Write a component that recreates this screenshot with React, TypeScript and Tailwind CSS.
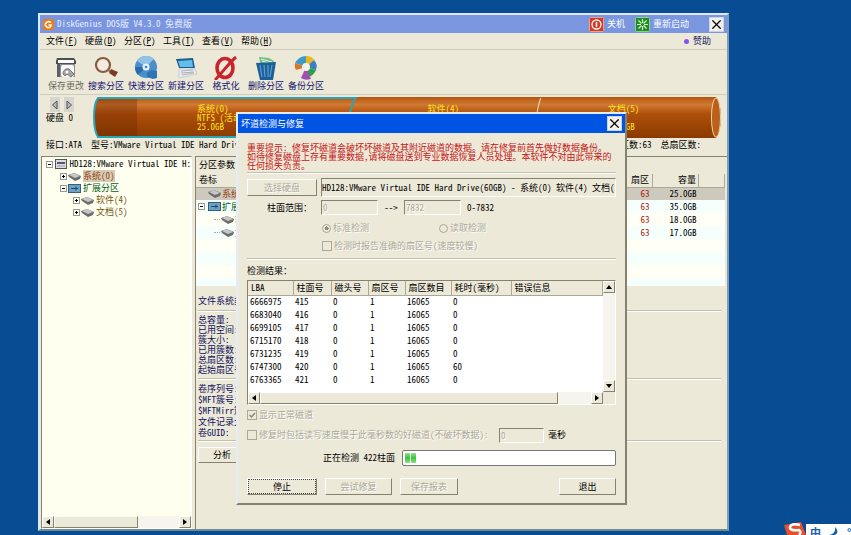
import React from 'react';
import { X } from 'lucide-react';

const raised = 'border border-t-white border-l-white border-r-[#85826f] border-b-[#85826f] bg-[#ece9d8]';
const sunken = 'border border-t-[#85826f] border-l-[#85826f] border-r-white border-b-white';
const disabledText = 'text-[#aca899] [text-shadow:1px_1px_0_#fff]';

const menus = [
  ['文件', 'F'],
  ['硬盘', 'D'],
  ['分区', 'P'],
  ['工具', 'T'],
  ['查看', 'V'],
  ['帮助', 'H'],
];

const SaveIcon = () => (
  <svg viewBox="0 0 24 24" className="w-6 h-6">
    <path d="M3 2h17l2 3v3H2V5z" fill="#4c4f52" />
    <path d="M4 4h16v3H4z" fill="#fafafa" />
    <path d="M3 8h18v13H3z" fill="#8b8f93" />
    <path d="M3 8h3v13H3z" fill="#5c6064" />
    <rect x="7" y="9" width="13" height="12" rx="2" fill="#f7f7f7" />
    <path d="M9 18c0-4 3-6 6-5l5 5-3 3-4-3-2 2z" fill="#a4a4a4" stroke="#555" strokeWidth=".7" />
    <circle cx="13" cy="16" r="1.500" fill="#fff" />
  </svg>
);

const SearchIcon = () => (
  <svg viewBox="0 0 24 24" className="w-6 h-6">
    <circle cx="9" cy="9" r="7" fill="#f3ece2" stroke="#8a5a3c" strokeWidth="2.200" />
    <path d="M14 14l3 2" stroke="#777" strokeWidth="2" />
    <path d="M17 13l7 3-3 5-6-4z" fill="#7b3a26" />
  </svg>
);

const QuickIcon = () => (
  <svg viewBox="0 0 24 24" className="w-6 h-6">
    <circle cx="12" cy="11" r="11" fill="#4a8fc9" />
    <path d="M12 11L3 5A11 11 0 0 1 20 3z" fill="#8fc3e8" />
    <path d="M12 11l-8 8a11 11 0 0 1-3-8z" fill="#2a6aa8" />
    <circle cx="12" cy="11" r="3.500" fill="#e8f2fa" />
    <circle cx="12" cy="11" r="1.300" fill="#3d86c4" />
    <path d="M13 17l4-3 6 1v7l-4 1-6-2z" fill="#2f74b5" />
  </svg>
);

const LaptopIcon = () => (
  <svg viewBox="0 0 24 24" className="w-6 h-6">
    <path d="M2 3l17-1 2 10H5z" fill="#1d5f92" />
    <path d="M4 5l14-1 1 7H6z" fill="#62bdec" />
    <path d="M5 13h16l2 5-18 4z" fill="#e9edf0" stroke="#b9c0c6" strokeWidth=".7" />
    <path d="M7 15l12-1M7 17l13-1M8 19l12-2" stroke="#9aa3aa" strokeWidth=".8" />
  </svg>
);

const FormatIcon = () => (
  <svg viewBox="0 0 24 24" className="w-6 h-6">
    <ellipse cx="11" cy="12" rx="8" ry="9.500" fill="none" stroke="#c9232d" strokeWidth="3.600" />
    <path d="M1 24C8 17 14 8 22 1" fill="none" stroke="#c9232d" strokeWidth="3" />
  </svg>
);

const TrashIcon = () => (
  <svg viewBox="0 0 24 24" className="w-6 h-6">
    <path d="M5 1l10 1 5 3-2 5H7z" fill="#6fbf8a" />
    <path d="M7 3l11 3M8 5l9 3" stroke="#e3f5e6" strokeWidth="1" />
    <path d="M2 7l20-1-3 18H6z" fill="#1d5f96" />
    <path d="M6 9l2 12M10 9l1 12M14 9v12M18 9l-2 12" stroke="#5ba0d0" strokeWidth="1.200" />
  </svg>
);

const BackupIcon = () => (
  <svg viewBox="0 0 24 24" className="w-6 h-6">
    <path d="M12 11L1 7Q5 0 12 0z" fill="#3d9bc9" />
    <path d="M12 11V0q6 0 8 4z" fill="#e9b91d" />
    <path d="M12 11l8-7q4 4 2 10z" fill="#3b7fc0" />
    <path d="M12 11l10 3q-2 5-7 7z" fill="#2f9e48" />
    <path d="M12 11l5 12q-6 2-10-1z" fill="#a14fb0" />
    <path d="M12 11L1 7q-1 4 1 7z" fill="#d8762b" />
    <circle cx="12" cy="11" r="4" fill="#f4f1e6" />
  </svg>
);

const tools = [
  { label: '保存更改', icon: <SaveIcon />, off: true },
  { label: '搜索分区', icon: <SearchIcon /> },
  { label: '快速分区', icon: <QuickIcon /> },
  { label: '新建分区', icon: <LaptopIcon /> },
  { label: '格式化', icon: <FormatIcon /> },
  { label: '删除分区', icon: <TrashIcon /> },
  { label: '备份分区', icon: <BackupIcon /> },
];

const DriveIcon = () => (
  <svg viewBox="0 0 13 9" className="w-[13px] h-[9px] shrink-0">
    <path d="M0 3l6-2 7 3-1 3-5 2-6-4z" fill="#6d6d6d" />
    <path d="M1 3l5-2 6 3-5 2z" fill="#c6c6c6" />
  </svg>
);

const ExtIcon = () => (
  <svg viewBox="0 0 13 9" className="w-[13px] h-[9px] shrink-0">
    <rect x=".5" y=".5" width="12" height="8" fill="#6ba3c4" stroke="#35607a" />
    <path d="M3 4.500h7M8 2.500v4" stroke="#24465a" />
  </svg>
);

const DiskIcon = () => (
  <svg viewBox="0 0 12 10" className="w-3 h-[10px] shrink-0">
    <rect x=".5" y=".5" width="11" height="9" fill="#dcdce4" stroke="#555" />
    <path d="M2 3h8v2H2z" fill="#555570" />
    <path d="M2 7h8" stroke="#99a" />
  </svg>
);

const Expander = ({ open }: { open?: boolean }) => (
  <svg viewBox="0 0 7 7" className="w-[7px] h-[7px] shrink-0">
    <rect x=".5" y=".5" width="6" height="6" fill="#fff" stroke="#9a9a8c" />
    <path d={open ? 'M2 3.500h3' : 'M2 3.500h3M3.500 2v3'} stroke="#000" />
  </svg>
);

const Arrow = ({ d }: { d: string }) => (
  <svg viewBox="0 0 8 8" className="w-2 h-2">
    <path d={d} />
  </svg>
);
const LEFT = 'M6 1v6L2 4z';
const RIGHT = 'M2 1v6l4-3z';
const UP = 'M1 6h6L4 2z';
const DOWN = 'M1 2h6L4 6z';

const DiskArrow = ({ label, d }: { label: string; d: string }) => (
  <button aria-label={label} className="w-[10px] h-[15px] flex items-center justify-center bg-[#d8d6cc]">
    <svg viewBox="0 0 8 12" className="w-2 h-3">
      <path d={d} fill="#b8b8b8" stroke="#555" />
    </svg>
  </button>
);

const ScrollButton = ({ label, d }: { label: string; d: string }) => (
  <button aria-label={label} className={`w-3 h-3 shrink-0 flex items-center justify-center ${raised}`}>
    <Arrow d={d} />
  </button>
);

const CloseButton = () => (
  <button aria-label="关闭" className="w-[15px] h-[15px] flex items-center justify-center bg-[#f4f2e8] border border-[#c9d3ee]">
    <X className="w-[15px] h-[15px] text-black shrink-0" strokeWidth={2} />
  </button>
);

const Rule = ({ className = '' }: { className?: string }) => (
  <div className={`h-[2px] shrink-0 border-t border-[#c2bfae] border-b border-b-white ${className}`} />
);

const Cylinder = () => (
  <div className="relative flex-1 h-[41px] mr-[5px] text-[#ffe21a]">
    <svg viewBox="0 0 628 41" preserveAspectRatio="none" className="absolute inset-0 w-full h-full">
      <defs>
        <linearGradient id="wood" x1="0" y1="0" x2="0" y2="1">
          <stop offset="0" stopColor="#b4560f" />
          <stop offset=".18" stopColor="#d07a34" />
          <stop offset=".4" stopColor="#b0500c" />
          <stop offset="1" stopColor="#8a3a00" />
        </linearGradient>
      </defs>
      <path d="M5 0H622Q627 6 627 20T622 41H5Q1 34 1 20T5 0z" fill="url(#wood)" />
      <path d="M5 0H44V41H5Q1 34 1 20T5 0z" fill="#6a2600" opacity=".35" />
      <path d="M262 1Q254 14 256 40H5Q1 34 1 20T5 1z" fill="none" stroke="#2aa5b8" strokeWidth="2" />
      <path d="M447 1q-6 16-4 40" fill="none" stroke="#f3d9b4" />
      <ellipse cx="622" cy="20.500" rx="4.500" ry="19.500" fill="#b8601c" stroke="#f0cfa0" />
    </svg>
    <div className="relative h-full grid grid-cols-[262fr_184fr_182fr] pt-[7px] leading-[9px] whitespace-nowrap">
      <div className="pl-[104px]">
        系统(0)
        <br />
        NTFS (活动)
        <br />
        25.0GB
      </div>
      <div className="pl-[72px]">
        软件(4)
        <br />
        NTFS
        <br />
        18.0GB
      </div>
      <div className="pl-[68px]">
        文档(5)
        <br />
        NTFS
        <br />
        17.0GB
      </div>
    </div>
  </div>
);

const PartitionTable = () => (
  <div className="h-[112px] shrink-0 bg-[repeating-linear-gradient(#f5fffb_0_13px,#fffff5_13px_26px)]">
    <table className="w-full table-fixed border-collapse">
      <colgroup>
        <col />
        <col className="w-[46px]" />
        <col className="w-[26px]" />
      </colgroup>
      <thead>
        <tr className="h-[13px] bg-[#ece9d8]">
          <th className="p-0 pl-[3px] font-normal border-b border-r border-[#aca899]">
            <div className="flex justify-between">
              <span>卷标</span>
              <span className="pr-[3px]">扇区</span>
            </div>
          </th>
          <th className="p-0 pr-[2px] font-normal text-right border-b border-r border-[#aca899]">容量</th>
          <th className="p-0 border-b border-r border-[#aca899]" />
        </tr>
      </thead>
      <tbody>
        <tr className="h-[13px] bg-[#cdc9bd]">
          <td className="p-0">
            <div className="flex items-center justify-between pr-[3px] text-[#b01818]">
              <span className="flex items-center gap-px pl-3 text-[#99460f]"><DriveIcon />系统(0)</span>
              63
            </div>
          </td>
          <td className="p-0 pr-[2px] text-right">25.0GB</td>
          <td />
        </tr>
        <tr className="h-[13px]">
          <td className="p-0">
            <div className="flex items-center justify-between pr-[3px] text-[#b01818]">
              <span className="flex items-center gap-px pl-[2px] text-[#006018]">
                <Expander open />
                <span className="w-px" />
                <ExtIcon />
                扩展分区
              </span>
              63
            </div>
          </td>
          <td className="p-0 pr-[2px] text-right">35.0GB</td>
          <td />
        </tr>
        {[['软件(4)', '18.0GB'], ['文档(5)', '17.0GB']].map(([name, size]) => (
          <tr key={name} className="h-[13px]">
            <td className="p-0">
              <div className="flex items-center justify-between pr-[3px] text-[#b01818]">
                <span className="flex items-center gap-px pl-[18px] text-[#99460f]">
                  <span className="w-[6px] border-t border-dotted border-[#aaa]" />
                  <DriveIcon />
                  {name}
                </span>
                63
              </div>
            </td>
            <td className="p-0 pr-[2px] text-right">{size}</td>
            <td />
          </tr>
        ))}
      </tbody>
    </table>
  </div>
);

const results = [
  ['6666975', '415', '0', '1', '16065', '0'],
  ['6683040', '416', '0', '1', '16065', '0'],
  ['6699105', '417', '0', '1', '16065', '0'],
  ['6715170', '418', '0', '1', '16065', '0'],
  ['6731235', '419', '0', '1', '16065', '0'],
  ['6747300', '420', '0', '1', '16065', '60'],
  ['6763365', '421', '0', '1', '16065', '0'],
];

const Results = () => (
  <div className={`bg-white ${sunken}`}>
    <div className="flex h-[111px]">
      <div className="flex-1">
        <table className="w-full table-fixed border-collapse">
          <colgroup>
            <col className="w-[45px]" />
            <col className="w-[38px]" />
            <col className="w-[37px]" />
            <col className="w-[37px]" />
            <col className="w-[46px]" />
            <col className="w-[60px]" />
            <col />
          </colgroup>
          <thead>
            <tr className="h-[14px] bg-[#ece9d8]">
              {['LBA', '柱面号', '磁头号', '扇区号', '扇区数目', '耗时(毫秒)', '错误信息'].map((h) => (
                <th key={h} className="p-0 pl-[3px] font-normal text-left whitespace-nowrap border-r border-b border-[#aca899]">{h}</th>
              ))}
            </tr>
          </thead>
          <tbody>
            {results.map((row) => (
              <tr key={row[0]} className="h-[13px]">
                {row.map((cell, i) => (
                  <td key={i} className="p-0 pl-[2px]">{cell}</td>
                ))}
                <td />
              </tr>
            ))}
          </tbody>
        </table>
      </div>
      <div className="w-3 flex flex-col justify-between bg-[#f6f4ec]">
        <ScrollButton label="向上" d={UP} />
        <ScrollButton label="向下" d={DOWN} />
      </div>
    </div>
    <div className="flex h-3 bg-[#f6f4ec]">
      <ScrollButton label="向左" d={LEFT} />
      <div className={`w-[298px] ${raised}`} />
      <div className="flex-1" />
      <ScrollButton label="向右" d={RIGHT} />
      <div className="w-3 bg-[#ece9d8]" />
    </div>
  </div>
);

const ScanDialog = () => (
  <section
    role="dialog"
    aria-label="坏道检测与修复"
    className="absolute left-[196px] top-[97px] w-[391px] bg-[#ece9d8] border-2 border-t-[#e4ecf8] border-l-[#e4ecf8] border-r-[#85826f] border-b-[#85826f]"
  >
    <header className="h-[19px] px-[3px] flex items-center justify-between bg-[#0054e3] text-white">
      <h2>坏道检测与修复</h2>
      <CloseButton />
    </header>
    <div className="px-[9px] pt-[10px] pb-2">
      <p className="h-[29px] leading-[9px] text-[#c81414] whitespace-nowrap">
        重要提示: 修复坏磁道会破坏坏磁道及其附近磁道的数据。请在修复前首先做好数据备份。
        <br />
        如待修复磁盘上存有重要数据，请将磁盘送到专业数据恢复人员处理。本软件不对由此带来的
        <br />
        任何损失负责。
      </p>
      <Rule />
      <div className="flex items-center mt-1 gap-1">
        <button disabled className={`w-[70px] h-[17px] ${raised} ${disabledText}`}>选择硬盘</button>
        <input
          readOnly
          aria-label="硬盘"
          value="HD128:VMware Virtual IDE Hard Drive(60GB) - 系统(0) 软件(4) 文档(5)"
          className={`flex-1 min-w-0 h-[19px] bg-[#ece9d8] ${sunken}`}
        />
      </div>
      <div className="flex items-center mt-[3px] h-[15px]">
        <label htmlFor="from" className="w-[74px] pl-5">柱面范围：</label>
        <input id="from" disabled defaultValue="0" className={`w-[57px] h-[15px] pl-px ${sunken} ${disabledText}`} />
        <span className="w-[26px] text-center">--&gt;</span>
        <input aria-label="结束柱面" disabled defaultValue="7832" className={`w-[57px] h-[15px] pl-px ${sunken} ${disabledText}`} />
        <span className="pl-[6px]">0-7832</span>
      </div>
      <div className={`flex mt-[5px] ml-[75px] h-4 ${disabledText}`}>
        <label className="w-[117px] flex items-center gap-[2px]">
          <input
            type="radio"
            name="mode"
            disabled
            defaultChecked
            className="appearance-none w-[9px] h-[9px] rounded-full border border-[#aca899] bg-[radial-gradient(circle,#8d8a7c_0_2px,#ece9d8_2px)]"
          />
          标准检测
        </label>
        <label className="flex items-center gap-[2px]">
          <input type="radio" name="mode" disabled className="appearance-none w-[9px] h-[9px] rounded-full border border-[#aca899]" />
          读取检测
        </label>
      </div>
      <label className={`flex items-center gap-[2px] ml-[75px] mt-[2px] h-4 ${disabledText}`}>
        <input type="checkbox" disabled className="appearance-none w-[10px] h-[10px] border border-[#aca899]" />
        检测时报告准确的扇区号(速度较慢)
      </label>
      <Rule className="mt-1" />
      <p className="mt-[6px] mb-1 leading-[10px]">检测结果：</p>
      <Results />
      <label className={`flex items-center gap-[2px] mt-px h-[18px] ${disabledText}`}>
        <span className="relative flex">
          <input type="checkbox" disabled defaultChecked className="appearance-none w-[10px] h-[10px] border border-[#aca899]" />
          <svg viewBox="0 0 10 10" className="absolute inset-0 w-[10px] h-[10px]">
            <path d="M2.500 5l2 2 3.500-4" fill="none" stroke="#8d8a7c" strokeWidth="1.500" />
          </svg>
        </span>
        显示正常磁道
      </label>
      <div className="flex items-center mt-[2px] h-[18px]">
        <label className={`w-[252px] flex items-center gap-[2px] whitespace-nowrap ${disabledText}`}>
          <input type="checkbox" disabled className="appearance-none w-[10px] h-[10px] border border-[#aca899]" />
          修复时包括读写速度慢于此毫秒数的好磁道(不破坏数据):
        </label>
        <input aria-label="毫秒" disabled defaultValue="0" className={`w-[45px] h-[15px] pl-px ${sunken} ${disabledText}`} />
        <span className="pl-1">毫秒</span>
      </div>
      <div className="flex items-center mt-[6px] h-4">
        <span className="w-[155px] pl-[76px] whitespace-nowrap">正在检测 422柱面</span>
        <div role="progressbar" aria-label="进度" aria-valuenow={5} className="flex-1 h-4 p-[2px] flex gap-px bg-white border border-[#777] rounded-[2px]">
          <span className="w-[5px] bg-linear-to-b from-[#8fe08a] via-[#2fc42f] to-[#8fe08a]" />
          <span className="w-[5px] bg-linear-to-b from-[#8fe08a] via-[#2fc42f] to-[#8fe08a]" />
        </div>
      </div>
      <div className="flex gap-2 mt-3 h-[17px]">
        <button className={`w-[70px] ${raised} outline-1 outline-dotted outline-[#444] -outline-offset-2`}>停止</button>
        <button disabled className={`w-[67px] ${raised} ${disabledText}`}>尝试修复</button>
        <button disabled className={`w-[58px] ${raised} ${disabledText}`}>保存报表</button>
        <button className={`w-[57px] ml-auto ${raised}`}>退出</button>
      </div>
    </div>
  </section>
);

const App: React.FC = () => (
  <div className="relative min-h-screen flex flex-col overflow-hidden bg-[#084c93] pl-[38px] pr-[122px] pt-[13px] pb-1 text-[9px] leading-[12px] text-black font-['Noto_Sans_CJK_SC',sans-serif] [font-feature-settings:'hwid']">
    <main className="relative flex-1 flex flex-col bg-[#ece9d8] border-2 border-t-[#dfe8f6] border-l-[#dfe8f6] border-r-[#7f9db9] border-b-[#6f8f8f]">
      <header className="h-[18px] flex items-center px-[3px] bg-[#7a96df] text-[#e6edff]">
        <svg viewBox="0 0 11 11" className="w-[11px] h-[11px] mr-[3px]">
          <rect width="11" height="11" rx="2" fill="#f07c12" />
          <path d="M8 3.500Q5 1.500 3 4T4.500 8.500Q8 9 8 6H5.500" fill="none" stroke="#fff" strokeWidth="1.500" />
        </svg>
        <h1>DiskGenius DOS版 V4.3.0 免费版</h1>
        <div className="ml-auto flex items-center text-white">
          <button className="w-[46px] flex items-center gap-[3px]">
            <svg viewBox="0 0 15 15" className="w-[15px] h-[15px]">
              <rect x=".5" y=".5" width="14" height="14" rx="1" fill="#d23c22" stroke="#f0a090" />
              <circle cx="7.500" cy="7.500" r="4.500" fill="none" stroke="#fff" strokeWidth="1.300" />
              <path d="M7.500 5v5" stroke="#fff" strokeWidth="1.500" />
            </svg>
            关机
          </button>
          <button className="w-[74px] flex items-center gap-[3px]">
            <svg viewBox="0 0 15 15" className="w-[15px] h-[15px]">
              <rect x=".5" y=".5" width="14" height="14" rx="1" fill="#1c8c2c" stroke="#8fce90" />
              <path d="M7.500 2v4M7.500 9v4M2 7.500h4M9 7.500h4M3.500 3.500l3 3M8.500 8.500l3 3M11.500 3.500l-3 3M6.500 8.500l-3 3" stroke="#d8f5c0" strokeWidth="1.200" />
            </svg>
            重新启动
          </button>
          <CloseButton />
        </div>
      </header>
      <nav className="h-[17px] flex items-center pl-[6px] pr-4 border-b border-[#cfccbc]">
        {menus.map(([name, key]) => (
          <button key={key} className="w-[39px] text-left">
            {name}(<u>{key}</u>)
          </button>
        ))}
        <a href="#sponsor" className="ml-auto flex items-center gap-1 text-[#10105c]">
          <span className="w-[5px] h-[5px] rounded-full bg-[#8455f0]" />
          赞助
        </a>
      </nav>
      <div className="h-[45px] flex items-end pl-[6px] pb-[2px] border-b border-[#cfccbc]">
        {tools.map((t) => (
          <button key={t.label} className="w-[40px] flex flex-col items-center whitespace-nowrap text-[#10106c]">
            {t.icon}
            <span className={t.off ? 'text-[#6c6a62]' : ''}>{t.label}</span>
          </button>
        ))}
      </div>
      <div className="flex pt-[2px] pl-[6px]">
        <div className="w-[47px]">
          <div className="flex gap-1 pl-1">
            <DiskArrow label="上一硬盘" d="M6 2v8L1.500 6z" />
            <DiskArrow label="下一硬盘" d="M2 2v8l4.500-4z" />
          </div>
          硬盘 0
        </div>
        <Cylinder />
      </div>
      <div className="flex justify-between h-[18px] pt-px pl-[6px] pr-[26px] whitespace-nowrap">
        <span>接口:ATA&nbsp; 型号:VMware Virtual IDE Hard Drive</span>
        <span>每道扇区数:63&nbsp; 总扇区数:</span>
      </div>
      <div className="flex-1 flex gap-[3px] pl-px">
        <aside className={`w-[151px] flex flex-col bg-[#fffff0] pt-px ${sunken}`}>
          <ul className="flex-1 overflow-hidden whitespace-nowrap">
            <li className="flex items-center gap-px pl-1"><Expander open /><span className="w-px" /><DiskIcon /><span className="ml-px">HD128:VMware Virtual IDE H:</span></li>
            <li className="flex items-center gap-px pl-[18px] text-[#99460f]"><Expander /><DriveIcon /><span className="ml-px bg-[#d6cbb6]">系统(0)</span></li>
            <li className="flex items-center gap-px pl-[18px] text-[#006018]"><Expander open /><ExtIcon /><span className="ml-px">扩展分区</span></li>
            <li className="flex items-center gap-px pl-[31px] text-[#775518]"><Expander /><DriveIcon /><span className="ml-px">软件(4)</span></li>
            <li className="flex items-center gap-px pl-[31px] text-[#775518]"><Expander /><DriveIcon /><span className="ml-px">文档(5)</span></li>
          </ul>
          <div className="flex h-3 bg-[#f6f4ec]">
            <ScrollButton label="向左" d={LEFT} />
            <div className={`w-[84px] ${raised}`} />
            <div className="flex-1" />
            <ScrollButton label="向右" d={RIGHT} />
          </div>
        </aside>
        <section className="flex-1 flex flex-col border-l border-t border-[#85826f] pr-[2px]">
          <h2 className="h-[17px] pt-[2px] pl-[3px]">分区参数</h2>
          <PartitionTable />
          <dl className="pl-[2px] pr-1 pt-[10px] leading-[10px] text-[#10105c]">
            <dt className="pb-1">文件系统类型:</dt>
            <Rule className="mb-[3px]" />
            {['总容量:', '已用空间:', '簇大小:', '已用簇数:', '总扇区数:', '起始扇区号:'].map((s) => <dt key={s}>{s}</dt>)}
            <Rule className="my-[3px]" />
            {['卷序列号:', '$MFT簇号:', '$MFTMirr簇号:', '文件记录大小:', '卷GUID:'].map((s) => <dt key={s} className="leading-[11px]">{s}</dt>)}
            <Rule className="mt-[2px]" />
          </dl>
          <button className={`w-[48px] h-4 mt-[5px] ml-[2px] ${raised}`}>分析</button>
        </section>
      </div>
      <ScanDialog />
    </main>
    <div className="absolute right-0 bottom-0 h-[13px] w-[67px] flex items-end overflow-hidden">
      <svg viewBox="0 0 22 13" className="w-[22px] h-[13px] shrink-0">
        <path d="M0 3L17 0l5 13H3z" fill="#e8502c" />
        <path d="M16 3Q7 1 6 5t9 3q3 2 0 5" fill="none" stroke="#fff" strokeWidth="2.500" />
      </svg>
      <div className="flex-1 h-[11px] pl-1 flex gap-2 bg-white text-[11px] leading-[16px] font-bold text-[#1a5ea8] whitespace-nowrap">
        中
        <svg viewBox="0 0 10 10" className="w-[10px] h-[10px] mt-[3px] shrink-0">
          <path d="M6 0q5 5 0 8-3 2-6 0 7-1 6-8z" fill="#1a5ea8" />
        </svg>
        °,
      </div>
    </div>
  </div>
);

export default App;
